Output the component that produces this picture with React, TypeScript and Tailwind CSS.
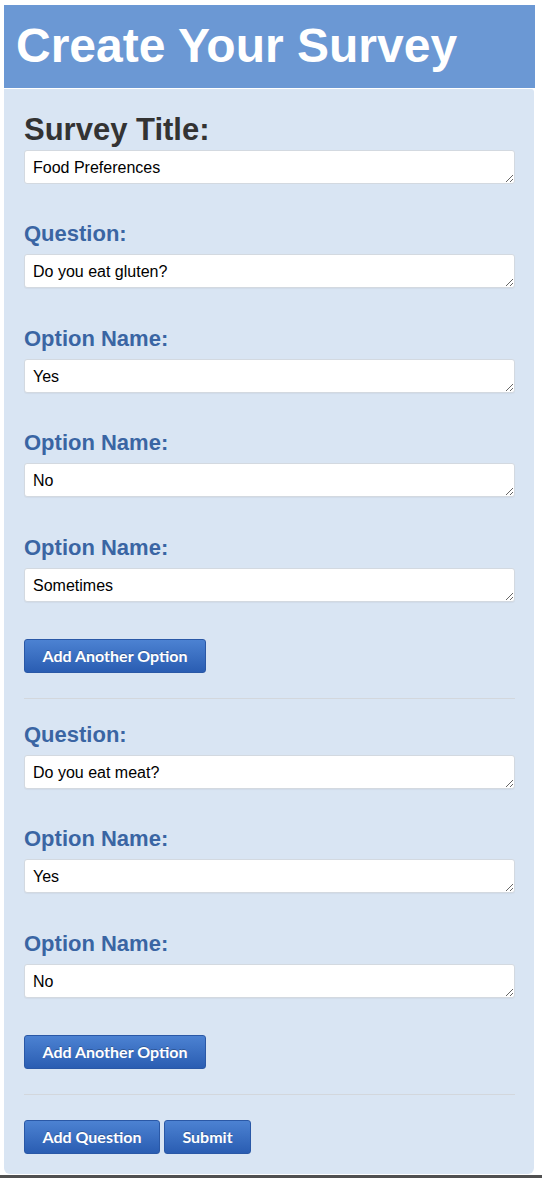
import React from "react";

const sans = { fontFamily: '"Liberation Sans", Arial, Helvetica, sans-serif' };

function Field({ label, value, first }: { label: string; value: string; first?: boolean }) {
  return (
    <div className={first ? "mt-[38px]" : "mt-[38.5px]"}>
      <div className="text-[22px] leading-[22px] h-[22px] font-bold text-[#3a65a3] pt-[1px]">{label}</div>
      <textarea
        readOnly
        rows={1}
        defaultValue={value}
        className="mt-[10px] block w-full h-[34px] bg-white border border-[#d3d9e0] rounded-[3px] px-[8px] pt-[7px] pb-[5px] text-[16px] leading-[20px] text-black overflow-hidden resize-y outline-none shadow-[0_1px_1px_rgba(0,0,0,0.04)]"
        style={sans}
      />
    </div>
  );
}

function Btn({ children }: { children: React.ReactNode }) {
  return (
    <button
      className="h-[34px] px-[17.5px] rounded-[3px] border border-[#2a58a6] bg-gradient-to-b from-[#4c82d2] to-[#2a5db2] text-white text-[16px] font-bold leading-[20px] [text-shadow:0_-1px_0_rgba(0,0,0,0.25)]"
      style={{ fontFamily: 'Lato, "Liberation Sans", sans-serif' }}
    >
      {children}
    </button>
  );
}

export default function App() {
  return (
    <div className="min-h-[1178px] bg-white relative" style={sans}>
      <div className="pt-[5px] pl-[4px]">
        <div className="w-[531px] h-[83px] bg-[#6b98d4] pt-[17px] pl-[12px]">
          <h1 className="text-[48px] leading-[48px] font-bold text-white">Create Your Survey</h1>
        </div>
        <div className="w-[530px] bg-[#d9e5f3] mt-[1px] rounded-b-[6px] rounded-tr-[3px] pl-[20px] pr-[19px] pt-[26px] pb-[20px]">
          <div className="text-[31px] leading-[30px] h-[30px] font-bold text-[#333333]">Survey Title:</div>
          <textarea
            readOnly
            rows={1}
            defaultValue="Food Preferences"
            className="mt-[5px] block w-full h-[34px] bg-white border border-[#d3d9e0] rounded-[3px] px-[8px] pt-[7px] pb-[5px] text-[16px] leading-[20px] text-black overflow-hidden resize-y outline-none"
            style={sans}
          />
          <Field label="Question:" value="Do you eat gluten?" first />
          <Field label="Option Name:" value="Yes" />
          <Field label="Option Name:" value="No" />
          <Field label="Option Name:" value="Sometimes" />
          <div className="mt-[37px]">
            <Btn>Add Another Option</Btn>
          </div>
          <div className="mt-[25px] h-px bg-[#d3d7dc]" />
          <div className="-mt-[14.5px]">
            <Field label="Question:" value="Do you eat meat?" />
          </div>
          <Field label="Option Name:" value="Yes" />
          <Field label="Option Name:" value="No" />
          <div className="mt-[37px]">
            <Btn>Add Another Option</Btn>
          </div>
          <div className="mt-[25px] h-px bg-[#d3d7dc]" />
          <div className="mt-[25px] flex gap-[4px]">
            <Btn>Add Question</Btn>
            <Btn>Submit</Btn>
          </div>
        </div>
      </div>
      <div className="h-[4px] bg-[#505050] mt-[1px]" />
    </div>
  );
}
